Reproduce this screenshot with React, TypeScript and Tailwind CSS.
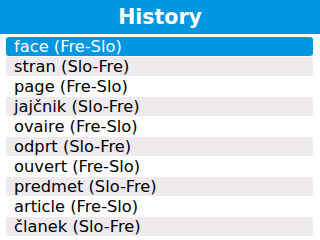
const entries = [
  "face (Fre-Slo)",
  "stran (Slo-Fre)",
  "page (Fre-Slo)",
  "jajčnik (Slo-Fre)",
  "ovaire (Fre-Slo)",
  "odprt (Slo-Fre)",
  "ouvert (Fre-Slo)",
  "predmet (Slo-Fre)",
  "article (Fre-Slo)",
  "članek (Slo-Fre)",
];

const App = () => {
  const selected = 0;

  return (
    <div className="w-[320px] h-[240px] overflow-hidden bg-white font-['DejaVu_Sans',sans-serif]">
      <header className="h-[34px] bg-[#0096e0] flex items-center justify-center">
        <h1 className="text-[20.5px] font-bold text-white leading-none">History</h1>
      </header>

      <ul className="flex flex-col gap-px pt-[3px] ml-[6px] mr-[7px]">
        {entries.map((entry, index) => {
          const isSelected = index === selected;
          const isOdd = index % 2 === 1;

          return (
            <li
              key={entry}
              className={`h-[19px] flex items-center pl-[8px] pt-px rounded-[3px] text-[16.3px] leading-none ${
                isSelected
                  ? "bg-[#0096e0] text-white"
                  : isOdd
                    ? "bg-[#eeeaee] text-black"
                    : "text-black"
              }`}
            >
              {entry}
            </li>
          );
        })}
      </ul>
    </div>
  );
};

export default App;
